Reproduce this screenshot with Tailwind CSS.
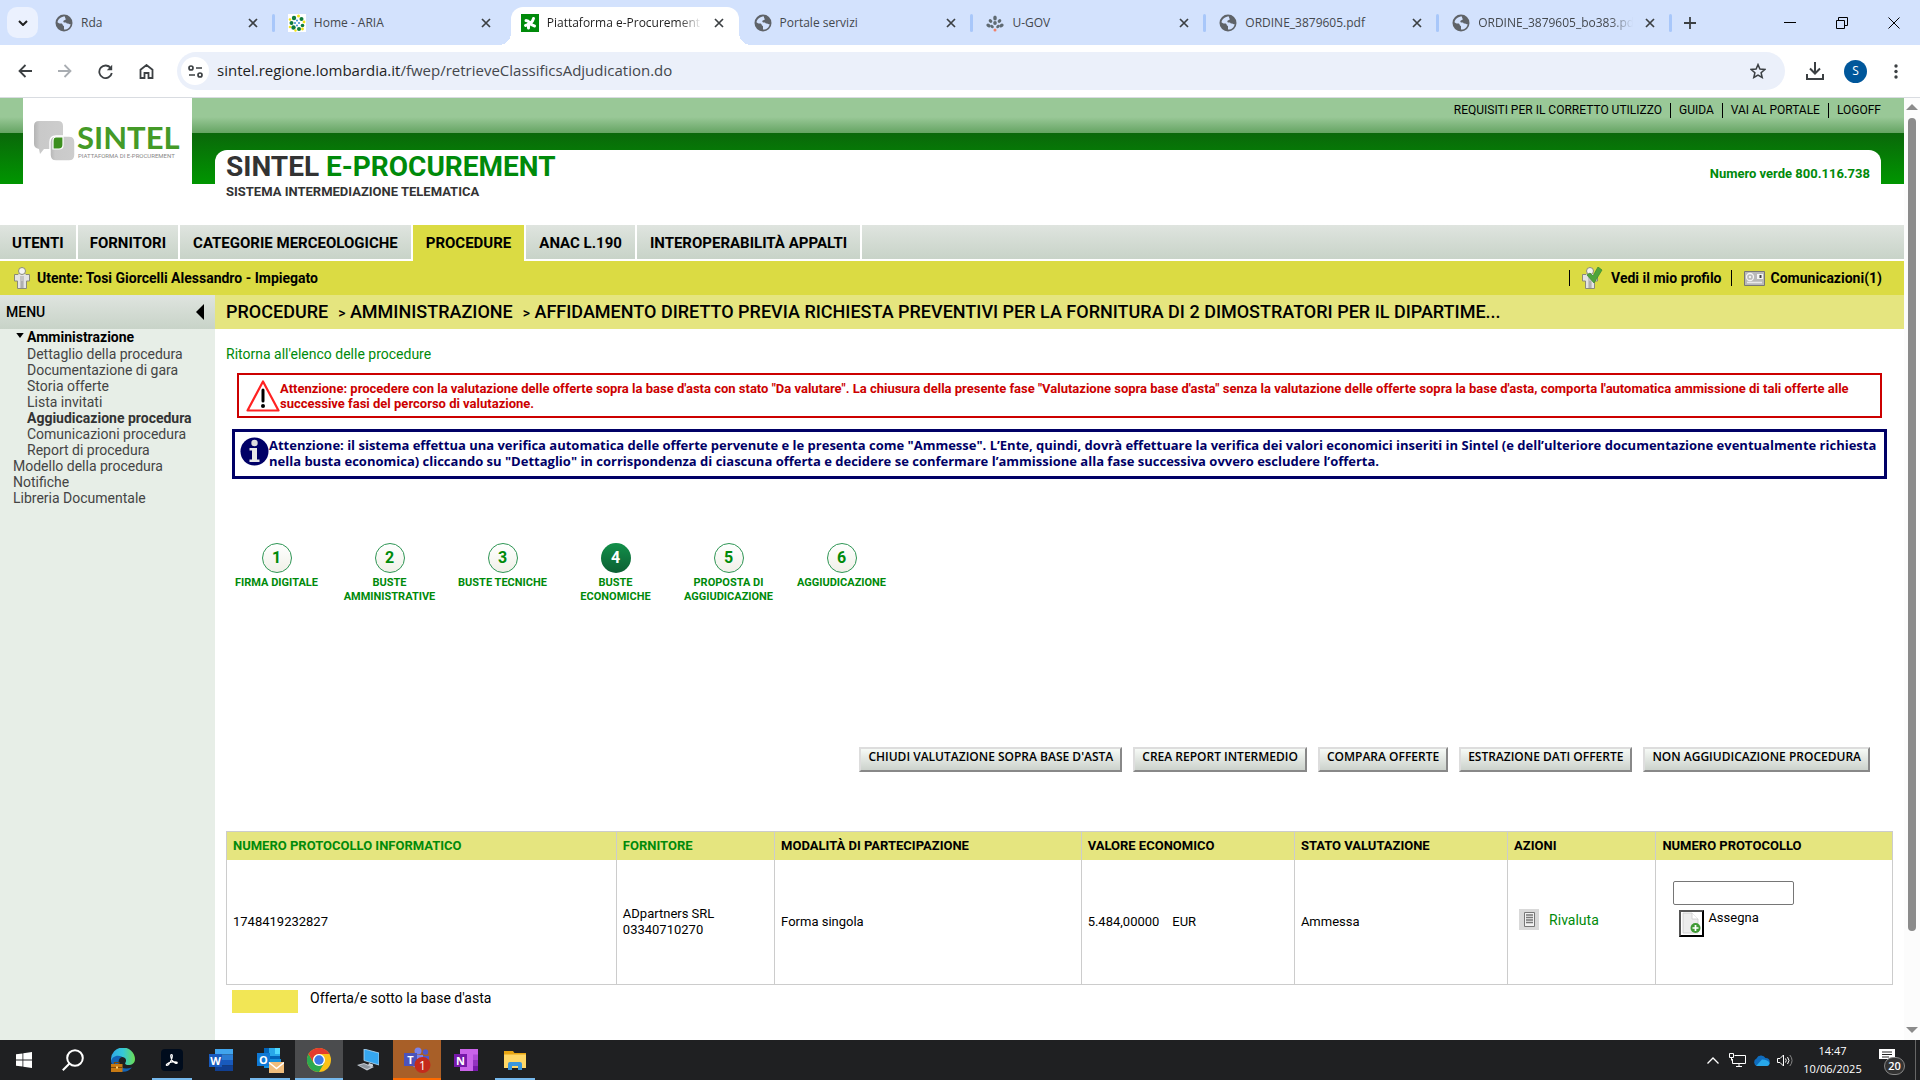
<!DOCTYPE html>
<html lang="it">
<head>
  <meta charset="UTF-8">
  <meta name="viewport" content="width=device-width, initial-scale=1.0">
  <title>Piattaforma e-Procurement</title>
  <script src="https://cdn.jsdelivr.net/npm/@tailwindcss/browser@4"></script>
</head>
<body class="flex h-screen flex-col overflow-hidden bg-white font-['Trebuchet_MS','Roboto',sans-serif] text-sm text-black">

  <!-- Icone riutilizzate -->
  <svg class="hidden">
    <symbol id="globe" viewBox="0 0 18 18">
      <circle cx="9" cy="9" r="8.5" fill="#5f6368"/>
      <path d="M10 2.5C6 2.500 3 5 2.500 8.300c1 1 2.200 1.300 3.500 1.200 1.300 0 1.500.6 1.700 1.400.3.700 1.300.6 1.300 1.500v3.200c3.500.2 6.300-2.200 6.600-5.600-1.200.6-2-.4-3.200-.4-1 0-.9-.9-1.600-1.100-.8-.3-2.500.2-2.500-1.100s1.800-1 2.400-1.900c.4-.6-1-1.500-.7-3z" fill="#d3e2fd"/>
    </symbol>
    <symbol id="close" viewBox="0 0 10 10">
      <path d="M1 1l8 8M9 1L1 9" stroke="#3c4043" stroke-width="1.7" fill="none"/>
    </symbol>
    <symbol id="person" viewBox="0 0 18 22">
      <path d="M1.500 7.500h3.500l1-1h6l1 1h3.500v6.500h-3v7.500H4.500V14h-3z" fill="#e4e4e4" stroke="#8a8a7a" stroke-width="1"/>
      <path d="M7 9h4v12H7z" fill="#c4c4c4"/>
      <circle cx="9" cy="4" r="3.500" fill="#f4f4f4" stroke="#8a8a7a"/>
      <path d="M9 14v7" stroke="#999"/>
    </symbol>
  </svg>

  <!-- Schede del browser -->
  <div class="flex h-[45px] shrink-0 items-end bg-[#d3e2fd] font-['Segoe_UI','Open_Sans',sans-serif] text-xs text-[#44484d]">
    <button aria-label="Cerca schede" class="mr-1 mb-[7px] ml-[7px] flex size-[31px] shrink-0 items-center justify-center rounded-[10px] bg-[#ebf1fe]">
      <svg class="h-[6px] w-[10px]" viewBox="0 0 10 6"><path d="M1 1l4 4 4-4" fill="none" stroke="#1f1f1f" stroke-width="2"/></svg>
    </button>
    <div class="flex h-full min-w-0 max-w-[1630px] flex-1 pt-[7px]">
      <div class="flex h-[31px] min-w-0 flex-1 items-center pl-[13px]">
        <svg class="size-[18px] shrink-0"><use href="#globe"/></svg>
        <span class="ml-2 flex-1 truncate">Rda</span>
        <button aria-label="Chiudi" class="mr-[14px] size-[10px]"><svg class="size-[10px]"><use href="#close"/></svg></button>
        <span class="h-[18px] w-[3px] rounded bg-[#a8c7fa]"></span>
      </div>
      <div class="flex h-[31px] min-w-0 flex-1 items-center pl-[13px]">
        <svg class="size-[18px] shrink-0" viewBox="0 0 18 18"><path fill="#fff" d="M0 0h18v18H0z"/><g fill="#107c3c"><circle cx="6" cy="4" r="2.200"/><circle cx="13.500" cy="5" r="2"/><circle cx="3.500" cy="9" r="2"/><circle cx="14.500" cy="11.500" r="1.800"/><circle cx="5.500" cy="13.500" r="2.200"/><circle cx="11" cy="15" r="2"/></g><g fill="#f1e31b"><circle cx="10.500" cy="2" r="1.500"/><circle cx="2" cy="5.500" r="1.300"/><circle cx="16" cy="8" r="1.400"/><circle cx="2" cy="13" r="1.300"/><circle cx="14.500" cy="15" r="1.400"/><circle cx="7.500" cy="16.500" r="1.200"/></g><g fill="#3b8fd0"><circle cx="9" cy="6.500" r="1"/><circle cx="7" cy="9" r="1"/><circle cx="11" cy="9" r="1"/><circle cx="9" cy="11.500" r="1"/></g></svg>
        <span class="ml-2 flex-1 truncate">Home - ARIA</span>
        <button aria-label="Chiudi" class="mr-[14px] size-[10px]"><svg class="size-[10px]"><use href="#close"/></svg></button>
        <span class="w-[3px]"></span>
      </div>
      <!-- Scheda attiva -->
      <div class="relative flex h-[38px] min-w-0 flex-1 items-center pb-[7px] pl-[13px] text-[#1f1f1f]">
        <div class="absolute inset-y-0 right-[2px] left-[3px] rounded-t-[12px] bg-white">
          <span class="absolute bottom-0 -left-3 size-3 bg-[radial-gradient(circle_at_0_0,#d3e2fd_12px,#fff_12px)]"></span>
          <span class="absolute -right-3 bottom-0 size-3 bg-[radial-gradient(circle_at_100%_0,#d3e2fd_12px,#fff_12px)]"></span>
        </div>
        <svg class="relative size-[18px] shrink-0" viewBox="0 0 18 18"><path fill="#008a0a" d="M0 0h18v18H0z"/><g fill="none" stroke="#fff" stroke-width="3" stroke-linecap="round"><path d="M5 6.500q2 0 4 2.500t4.500 3"/><path d="M12.500 4.500q-.5 2.500-3 4.500T7.500 14"/><path d="M4.500 11.500q2-.5 4-2.500"/></g></svg>
        <span class="relative ml-2 flex-1 overflow-hidden [mask-image:linear-gradient(to_right,#000_85%,transparent)] whitespace-nowrap">Piattaforma e-Procurement</span>
        <button aria-label="Chiudi" class="relative mr-[14px] ml-3 size-[10px]"><svg class="size-[10px]"><use href="#close"/></svg></button>
        <span class="w-[3px]"></span>
      </div>
      <div class="flex h-[31px] min-w-0 flex-1 items-center pl-[13px]">
        <svg class="size-[18px] shrink-0"><use href="#globe"/></svg>
        <span class="ml-2 flex-1 truncate">Portale servizi</span>
        <button aria-label="Chiudi" class="mr-[14px] size-[10px]"><svg class="size-[10px]"><use href="#close"/></svg></button>
        <span class="h-[18px] w-[3px] rounded bg-[#a8c7fa]"></span>
      </div>
      <div class="flex h-[31px] min-w-0 flex-1 items-center pl-[13px]">
        <svg class="size-[18px] shrink-0" viewBox="0 0 18 18"><g fill="#5f6a72"><ellipse cx="9" cy="4" rx="1.800" ry="2.500"/><ellipse cx="4.500" cy="7" rx="2" ry="1.600" transform="rotate(40 4.500 7)"/><ellipse cx="13.500" cy="7" rx="2" ry="1.600" transform="rotate(-40 13.500 7)"/><ellipse cx="9" cy="9" rx="1.800" ry="2"/><ellipse cx="2.500" cy="11.500" rx="2.200" ry="1.700" transform="rotate(40 2.500 11.500)"/><ellipse cx="15.500" cy="11.500" rx="2.200" ry="1.700" transform="rotate(-40 15.500 11.500)"/><ellipse cx="6" cy="12.500" rx="2" ry="1.500" transform="rotate(45 6 12.500)"/><ellipse cx="12" cy="12.500" rx="2" ry="1.500" transform="rotate(-45 12 12.500)"/></g><circle cx="9" cy="16" r="1.500" fill="#f0806a"/></svg>
        <span class="ml-2 flex-1 truncate">U-GOV</span>
        <button aria-label="Chiudi" class="mr-[14px] size-[10px]"><svg class="size-[10px]"><use href="#close"/></svg></button>
        <span class="h-[18px] w-[3px] rounded bg-[#a8c7fa]"></span>
      </div>
      <div class="flex h-[31px] min-w-0 flex-1 items-center pl-[13px]">
        <svg class="size-[18px] shrink-0"><use href="#globe"/></svg>
        <span class="ml-2 flex-1 truncate">ORDINE_3879605.pdf</span>
        <button aria-label="Chiudi" class="mr-[14px] size-[10px]"><svg class="size-[10px]"><use href="#close"/></svg></button>
        <span class="h-[18px] w-[3px] rounded bg-[#a8c7fa]"></span>
      </div>
      <div class="flex h-[31px] min-w-0 flex-1 items-center pl-[13px]">
        <svg class="size-[18px] shrink-0"><use href="#globe"/></svg>
        <span class="ml-2 flex-1 overflow-hidden [mask-image:linear-gradient(to_right,#000_85%,transparent)] whitespace-nowrap">ORDINE_3879605_bo383.pdf</span>
        <button aria-label="Chiudi" class="mr-[14px] ml-3 size-[10px]"><svg class="size-[10px]"><use href="#close"/></svg></button>
        <span class="h-[18px] w-[3px] rounded bg-[#a8c7fa]"></span>
      </div>
    </div>
    <button aria-label="Nuova scheda" class="mb-4 ml-3 size-3"><svg class="size-3" viewBox="0 0 12 12"><path d="M6 0v12M0 6h12" stroke="#3c4043" stroke-width="1.8"/></svg></button>
    <div class="mb-4 ml-auto flex items-center gap-10 pr-5">
      <button aria-label="Riduci" class="size-3"><svg class="size-3" viewBox="0 0 12 12"><path d="M0 5.500h12" stroke="#000"/></svg></button>
      <button aria-label="Ripristina" class="size-3"><svg class="size-3" viewBox="0 0 12 12"><path d="M.5 3.500h8v8h-8zM2.500 3V.5h9v8H9" stroke="#000" fill="none"/></svg></button>
      <button aria-label="Chiudi finestra" class="size-3"><svg class="size-3" viewBox="0 0 12 12"><path d="M.5.5l11 11M11.500.5l-11 11" stroke="#000" fill="none"/></svg></button>
    </div>
  </div>

  <!-- Barra degli indirizzi -->
  <div class="flex h-[53px] shrink-0 items-center border-b border-[#d9dce1] bg-white pr-[22px] pl-[18px] font-['Segoe_UI','Open_Sans',sans-serif]">
    <div class="flex items-center gap-[26px]">
      <button aria-label="Indietro" class="size-[14px]"><svg class="size-[14px]" viewBox="0 0 14 14"><path d="M14 7H1.500M7.500 1l-6 6 6 6" fill="none" stroke="#3c4043" stroke-width="1.800"/></svg></button>
      <button aria-label="Avanti" class="size-[14px]"><svg class="size-[14px]" viewBox="0 0 14 14"><path d="M0 7h12.500M6.500 1l6 6-6 6" fill="none" stroke="#a9adb2" stroke-width="1.800"/></svg></button>
      <button aria-label="Ricarica" class="size-[15px]"><svg class="size-[15px]" viewBox="0 0 15 15"><path d="M12.800 4.200A6.300 6.300 0 1 0 13.800 9" fill="none" stroke="#3c4043" stroke-width="1.800"/><path d="M14.200.8v5.400H8.800z" fill="#3c4043"/></svg></button>
      <button aria-label="Pagina iniziale" class="size-[15px]"><svg class="size-[15px]" viewBox="0 0 15 15"><path d="M1.500 5.800L7.500 1l6 4.800v8.200h-4V9h-4v5h-4z" fill="none" stroke="#3c4043" stroke-width="1.800"/></svg></button>
    </div>
    <div class="ml-[23px] flex h-[38px] flex-1 items-center rounded-full bg-[#ebf0fa] pr-[19px] pl-1">
      <span class="flex size-7 shrink-0 items-center justify-center rounded-full bg-white">
        <svg class="h-[13px] w-[15px]" viewBox="0 0 15 13" fill="none" stroke="#3c4043" stroke-width="1.700"><circle cx="3" cy="3" r="2"/><path d="M8 3h6M1 10h6"/><circle cx="12" cy="10" r="2"/></svg>
      </span>
      <p class="ml-2 flex-1 text-[15px] text-[#44474c]"><span class="text-[#1f1f1f]">sintel.regione.lombardia.it</span>/fwep/retrieveClassificsAdjudication.do</p>
      <button aria-label="Preferiti" class="size-4"><svg class="size-4" viewBox="0 0 16 16"><path d="M8 1.600l1.900 4.500 4.900.4-3.700 3.200 1.100 4.800L8 12l-4.200 2.500 1.100-4.800L1.200 6.500l4.900-.4z" fill="none" stroke="#3c4043" stroke-width="1.500"/></svg></button>
    </div>
    <button aria-label="Download" class="ml-[21px] size-[18px]"><svg class="size-[18px]" viewBox="0 0 18 18"><path d="M9 0v11M4 6.500l5 5 5-5M1 12v5h16v-5" fill="none" stroke="#3c4043" stroke-width="2"/></svg></button>
    <button class="ml-5 flex size-[23px] items-center justify-center rounded-full bg-[#00579b] text-xs text-white">S</button>
    <button aria-label="Menu" class="ml-[27px] h-[15px] w-1"><svg class="h-[15px] w-1" viewBox="0 0 4 15" fill="#3c4043"><circle cx="2" cy="2" r="1.700"/><circle cx="2" cy="7.500" r="1.700"/><circle cx="2" cy="13" r="1.700"/></svg></button>
  </div>

  <div class="flex min-h-0 flex-1">
    <div class="flex min-w-0 flex-1 flex-col">

      <!-- Testata -->
      <header class="flex h-[127px] shrink-0 bg-[linear-gradient(to_bottom,#99c897_0px,#99c897_19px,#65a463_35px,#0a680a_35px,#009600_86px)] bg-[length:100%_86px] bg-no-repeat">
        <a href="#" aria-label="Sintel" class="ml-[23px] h-[86px] w-[169px] bg-white">
          <svg class="h-[86px] w-[169px]" viewBox="0 0 169 86">
            <defs><linearGradient id="bubble" x1="0" x2="1"><stop offset="0" stop-color="#b4b4b4"/><stop offset=".2" stop-color="#c9c9c9"/><stop offset="1" stop-color="#cdcdcd"/></linearGradient></defs>
            <path d="M16 23h19q5 0 5 5v14l-12 1v8h-7l-4 5-1-5q-5-1-5-5V28q0-5 5-5z" fill="url(#bubble)"/>
            <path d="M33 38h13q6 0 6 6v13q0 6-6 6H33q-6 0-6-6V44q0-6 6-6z" fill="url(#bubble)" stroke="#fff" stroke-width="1.500"/>
            <path d="M33 39h7v8q0 4-4 4h-6v-8q0-4 3-4z" fill="#3c8f1e" stroke="#fff" stroke-width="1.200"/>
            <text x="54" y="51" font-family="Lato, sans-serif" font-weight="700" font-size="31" fill="#449a28">SINTEL</text>
            <text x="55" y="60" font-family="Roboto, sans-serif" font-size="6" fill="#888">PIATTAFORMA DI E-PROCUREMENT</text>
          </svg>
        </a>
        <div class="mx-[23px] flex flex-1 flex-col">
          <nav class="flex h-[52px] justify-end divide-x divide-black pt-[5px] text-xs leading-[15px] [&>a]:h-[15px]">
            <a href="#" class="pr-2">REQUISITI PER IL CORRETTO UTILIZZO</a>
            <a href="#" class="px-2">GUIDA</a>
            <a href="#" class="px-2">VAI AL PORTALE</a>
            <a href="#" class="pl-2">LOGOFF</a>
          </nav>
          <div class="flex flex-1 justify-between rounded-t-xl bg-white pr-[11px] pl-[11px]">
            <div>
              <h1 class="text-[28px] leading-[34px] font-bold text-[#333]">SINTEL <span class="text-[#008a0a]">E-PROCUREMENT</span></h1>
              <p class="text-[13px] leading-4 font-bold text-[#333]">SISTEMA INTERMEDIAZIONE TELEMATICA</p>
            </div>
            <p class="pt-4 text-[13px] leading-4 font-bold text-[#008a0a]">Numero verde 800.116.738</p>
          </div>
        </div>
      </header>

      <nav class="flex h-9 shrink-0 gap-[2px] text-[15px] leading-9 font-bold [&>a]:px-[13px] [&>a:first-child]:px-3 [&>a:nth-child(2)]:px-3">
        <a href="#" class="mb-[2px] bg-linear-to-b from-[#dfe4df] to-[#c8d3c8]">UTENTI</a>
        <a href="#" class="mb-[2px] bg-linear-to-b from-[#dfe4df] to-[#c8d3c8]">FORNITORI</a>
        <a href="#" class="mb-[2px] bg-linear-to-b from-[#dfe4df] to-[#c8d3c8]">CATEGORIE MERCEOLOGICHE</a>
        <a href="#" class="bg-[#dbdb43]">PROCEDURE</a>
        <a href="#" class="mb-[2px] bg-linear-to-b from-[#dfe4df] to-[#c8d3c8]">ANAC L.190</a>
        <a href="#" class="mb-[2px] bg-linear-to-b from-[#dfe4df] to-[#c8d3c8]">INTEROPERABILITÀ APPALTI</a>
        <span class="mb-[2px] flex-1 bg-linear-to-b from-[#dfe4df] to-[#c8d3c8]"></span>
      </nav>

      <div class="flex h-[34px] shrink-0 items-center bg-[#dbdb43] pr-[22px] pl-[13px] font-bold">
        <svg class="h-[22px] w-[18px]"><use href="#person"/></svg>
        <span class="ml-[6px]">Utente: Tosi Giorcelli Alessandro - Impiegato</span>
        <a href="#" class="ml-auto flex h-4 items-center border-l border-black pr-[9px] pl-[11px]">
          <svg class="h-[22px] w-[22px]" viewBox="0 0 22 22"><use href="#person" width="18" height="22"/><path d="M6 8l3-2 3 3 5-9 4 3-8 13z" fill="#4fa53c" stroke="#3c8f30" stroke-width=".8"/></svg>
          <span class="ml-2">Vedi il mio profilo</span>
        </a>
        <a href="#" class="flex h-4 items-center border-l border-black pl-3">
          <svg class="h-[15px] w-[21px]" viewBox="0 0 21 15"><path d="M.5.5h20v14H.5z" fill="#b9b9b9" stroke="#777"/><path d="M13 3h6v5h-6z" fill="#f5f5f5"/><path d="M15.500 4h2v3h-2z" fill="#444"/><circle cx="6" cy="6" r="3.500" fill="none" stroke="#f4f4f4" stroke-width="1.300"/><circle cx="6" cy="6" r="1.200" fill="#f4f4f4"/><path d="M3 11.500h15" stroke="#e9e9e9" stroke-width="1.500"/></svg>
          <span class="ml-[6px]">Comunicazioni(1)</span>
        </a>
      </div>

      <div class="flex min-h-0 flex-1">
        <!-- Menu laterale -->
        <aside class="w-[215px] shrink-0 bg-[#e7eee7] leading-4 text-[#444]">
          <div class="flex h-[34px] items-center justify-between bg-linear-to-b from-[#dfe4df] to-[#c8d3c8] pr-[11px] pl-[6px] font-medium text-black">
            <span>MENU</span>
            <button aria-label="Chiudi menu" class="h-4 w-2"><svg class="h-4 w-2" viewBox="0 0 8 16"><path d="M8 0v16L0 8z"/></svg></button>
          </div>
          <ul class="pl-[27px]">
            <li class="relative pb-[1px] font-bold text-black">
              <svg class="absolute top-[4px] -left-[11px] h-[5px] w-2" viewBox="0 0 9 6"><path d="M0 0h9L4.500 6z"/></svg>
              <a href="#">Amministrazione</a>
            </li>
            <li><a href="#">Dettaglio della procedura</a></li>
            <li><a href="#">Documentazione di gara</a></li>
            <li><a href="#">Storia offerte</a></li>
            <li><a href="#">Lista invitati</a></li>
            <li><a href="#" class="font-bold text-[#333]">Aggiudicazione procedura</a></li>
            <li><a href="#">Comunicazioni procedura</a></li>
            <li><a href="#">Report di procedura</a></li>
          </ul>
          <ul class="pl-[13px]">
            <li><a href="#">Modello della procedura</a></li>
            <li><a href="#">Notifiche</a></li>
            <li><a href="#">Libreria Documentale</a></li>
          </ul>
        </aside>

        <main class="min-w-0 flex-1">
          <div class="flex h-[34px] items-center gap-[10px] bg-[#e5e57f] pl-[11px] text-lg font-medium whitespace-nowrap">
            <span>PROCEDURE</span>
            <span><span class="text-sm">&gt;</span> AMMINISTRAZIONE</span>
            <span><span class="text-sm">&gt;</span> AFFIDAMENTO DIRETTO PREVIA RICHIESTA PREVENTIVI PER LA FORNITURA DI 2 DIMOSTRATORI PER IL DIPARTIME...</span>
          </div>

          <div class="pr-[11px] pl-[11px]">
            <p class="pt-[15px] leading-5"><a href="#" class="text-[#008a0a]">Ritorna all'elenco delle procedure</a></p>

            <div class="mx-[11px] mt-[9px] flex items-center border-2 border-[#c00] pt-[5px] pb-1 pl-[7px] text-[13px] leading-[15px] font-bold text-[#c00]">
              <svg class="h-8 w-[34px] shrink-0" viewBox="0 0 34 32"><path d="M17 1.500L32.500 30.500H1.500z" fill="#fff" stroke="#f22" stroke-width="2.200" stroke-linejoin="round"/><path d="M17 10v11" stroke="#000" stroke-width="3" stroke-linecap="round"/><circle cx="17" cy="26" r="2"/></svg>
              <p>Attenzione: procedere con la valutazione delle offerte sopra la base d'asta con stato "Da valutare". La chiusura della presente fase "Valutazione sopra base d'asta" senza la valutazione delle offerte sopra la base d'asta, comporta l'automatica ammissione di tali offerte alle<br>successive fasi del percorso di valutazione.</p>
            </div>

            <div class="mx-[6px] mt-[11px] flex items-start border-3 border-[#006] pt-[5px] pb-[7px] pl-[5px] font-['Trebuchet_MS','Open_Sans',sans-serif] text-[13px] leading-4 font-bold text-[#006]">
              <svg class="size-[29px] shrink-0" viewBox="0 0 29 29"><circle cx="14.500" cy="14.500" r="14" fill="#000066"/><circle cx="14.500" cy="6" r="3.200" fill="#ddd"/><path d="M9.500 11h7.500v11.500h2.500V25h-10v-2.500H12v-9H9.500z" fill="#e8e8e8"/></svg>
              <p>Attenzione: il sistema effettua una verifica automatica delle offerte pervenute e le presenta come "Ammesse". L’Ente, quindi, dovrà effettuare la verifica dei valori economici inseriti in Sintel (e dell’ulteriore documentazione eventualmente richiesta<br>nella busta economica) cliccando su "Dettaglio" in corrispondenza di ciascuna offerta e decidere se confermare l’ammissione alla fase successiva ovvero escludere l’offerta.</p>
            </div>

            <!-- Fasi -->
            <ol class="-ml-[6px] mt-16 flex h-[60px] text-center text-[11px] leading-[14px] font-bold text-[#008a0a] [&>li]:flex [&>li]:w-[113px] [&>li]:flex-col [&>li]:items-center [&>li]:gap-[3px]">
              <li><span class="size-[30px] shrink-0 rounded-full border border-[#2f9655] bg-linear-to-b from-white to-[#f1f0e8] text-base leading-[28px]">1</span><a href="#">FIRMA DIGITALE</a></li>
              <li><span class="size-[30px] shrink-0 rounded-full border border-[#2f9655] bg-linear-to-b from-white to-[#f1f0e8] text-base leading-[28px]">2</span><a href="#">BUSTE<br>AMMINISTRATIVE</a></li>
              <li><span class="size-[30px] shrink-0 rounded-full border border-[#2f9655] bg-linear-to-b from-white to-[#f1f0e8] text-base leading-[28px]">3</span><a href="#">BUSTE TECNICHE</a></li>
              <li><span class="size-[30px] shrink-0 rounded-full bg-linear-to-b from-[#12904a] to-[#0c5f33] text-base leading-[30px] text-white">4</span><a href="#">BUSTE<br>ECONOMICHE</a></li>
              <li><span class="size-[30px] shrink-0 rounded-full border border-[#2f9655] bg-linear-to-b from-white to-[#f1f0e8] text-base leading-[28px]">5</span><a href="#">PROPOSTA DI<br>AGGIUDICAZIONE</a></li>
              <li><span class="size-[30px] shrink-0 rounded-full border border-[#2f9655] bg-linear-to-b from-white to-[#f1f0e8] text-base leading-[28px]">6</span><a href="#">AGGIUDICAZIONE</a></li>
            </ol>

            <div class="mt-36 mr-[23px] flex justify-end gap-[11px] font-['Trebuchet_MS','Open_Sans',sans-serif] text-xs leading-4 font-semibold [&>button]:h-[25px] [&>button]:border-2 [&>button]:border-t-[#ddd] [&>button]:border-r-[#888] [&>button]:border-b-[#888] [&>button]:border-l-[#ddd] [&>button]:bg-linear-to-b [&>button]:from-[#f6faf6] [&>button]:to-[#ccd2cc] [&>button]:px-[7px] [&>button]:pb-[5px]">
              <button>CHIUDI VALUTAZIONE SOPRA BASE D'ASTA</button>
              <button>CREA REPORT INTERMEDIO</button>
              <button>COMPARA OFFERTE</button>
              <button>ESTRAZIONE DATI OFFERTE</button>
              <button>NON AGGIUDICAZIONE PROCEDURA</button>
            </div>

            <table class="mt-[59px] w-full table-fixed border border-[#ccc] text-left text-[13px] leading-4 [&_td]:border-x [&_td]:border-[#ccc] [&_td]:px-[6px] [&_th]:border-x [&_th]:border-[#ccc] [&_th]:px-[6px]">
              <thead>
                <tr class="h-7 bg-[#e5e57f]">
                  <th class="w-[23.4%]"><a href="#" class="text-[#008a0a]">NUMERO PROTOCOLLO INFORMATICO</a></th>
                  <th class="w-[9.5%]"><a href="#" class="text-[#008a0a]">FORNITORE</a></th>
                  <th class="w-[18.4%]">MODALITÀ DI PARTECIPAZIONE</th>
                  <th class="w-[12.8%]">VALORE ECONOMICO</th>
                  <th class="w-[12.8%]">STATO VALUTAZIONE</th>
                  <th class="w-[8.9%]">AZIONI</th>
                  <th>NUMERO PROTOCOLLO</th>
                </tr>
              </thead>
              <tbody>
                <tr class="h-[125px]">
                  <td>1748419232827</td>
                  <td>ADpartners SRL<br>03340710270</td>
                  <td>Forma singola</td>
                  <td>5.484,00000 &nbsp;&nbsp; EUR</td>
                  <td>Ammessa</td>
                  <td>
                    <a href="#" class="flex items-center gap-[10px] pb-1 pl-[5px] text-sm text-[#008a0a]">
                      <svg class="h-[21px] w-5" viewBox="0 0 20 21"><path fill="#d9d9d9" d="M0 0h20v21H0z"/><path d="M5.500 3.500h10v14h-10z" fill="#f2f2f2" stroke="#777"/><path d="M7 6h7M7 8.500h7M7 11h7M7 13.500h7" stroke="#777" stroke-width="1.300"/></svg>
                      Rivaluta
                    </a>
                  </td>
                  <td class="pt-[21px] align-top">
                    <input type="text" aria-label="Numero protocollo" class="ml-[11px] block h-6 w-[121px] rounded-xs border border-[#767676] bg-white px-1">
                    <div class="mt-[5px] ml-[17px] flex gap-1">
                      <button id="assegna" aria-labelledby="assegna-label" class="h-[27px] w-[25px] border-2 border-t-[#555] border-r-black border-b-black border-l-[#555] bg-white"><svg class="h-[23px] w-[21px]" viewBox="0 0 21 23"><path d="M2 1h9l6 6v14H2z" fill="#ececec" stroke="#ccc" stroke-width=".8"/><path d="M11 1v6h6" fill="#fff" stroke="#ccc" stroke-width=".8"/><circle cx="14.500" cy="16" r="5" fill="#3f9a34"/><path d="M14.500 13v6M11.500 16h6" stroke="#fff" stroke-width="1.700"/></svg></button>
                      <label id="assegna-label" for="assegna">Assegna</label>
                    </div>
                  </td>
                </tr>
              </tbody>
            </table>

            <div class="mt-[5px] ml-[6px] flex gap-3 leading-4">
              <span class="h-[23px] w-[66px] bg-[#f2e655]"></span>
              <span>Offerta/e sotto la base d'asta</span>
            </div>
          </div>
        </main>
      </div>
    </div>

    <!-- Barra di scorrimento -->
    <div class="flex w-4 shrink-0 flex-col items-center bg-[#fcfcfc] pt-[6px] pb-[7px]">
      <svg class="h-[6px] w-3 shrink-0" viewBox="0 0 12 6"><path d="M6 0l6 6H0z" fill="#8b8b8b"/></svg>
      <div class="mt-2 w-2 flex-[0_1_813px] rounded-full bg-[#8b8b8b]"></div>
      <svg class="mt-auto h-[6px] w-3 shrink-0" viewBox="0 0 12 6"><path d="M6 6l6-6H0z" fill="#8b8b8b"/></svg>
    </div>
  </div>

  <!-- Barra delle applicazioni -->
  <footer class="flex h-10 shrink-0 items-stretch bg-[#1f2022] font-['Segoe_UI','Open_Sans',sans-serif] text-white">
    <div class="flex gap-[1px] [&>button]:flex [&>button]:w-12 [&>button]:items-center [&>button]:justify-center">
      <button aria-label="Start"><svg class="size-4" viewBox="0 0 16 16" fill="#fff"><path d="M0 2.300l6.500-.9v6.200H0zM7.300 1.300L16 0v7.600H7.300zM0 8.400h6.500v6.200L0 13.700zM7.300 8.400H16V16l-8.700-1.300z"/></svg></button>
      <button aria-label="Cerca"><svg class="size-[22px]" viewBox="0 0 22 22" fill="none" stroke="#fff" stroke-width="2"><circle cx="13" cy="9" r="7.800"/><path d="M7.500 14.500L.8 21.300"/></svg></button>
      <button aria-label="Edge" class="ml-[1px]"><svg class="size-6" viewBox="0 0 24 24"><defs><linearGradient id="eg" x1="0" x2="1"><stop offset="0" stop-color="#2fa8e8"/><stop offset=".5" stop-color="#35c8d8"/><stop offset="1" stop-color="#6bdd52"/></linearGradient></defs><path d="M0 12A12 12 0 0 1 24 11c0 4-3 6-6.500 6-3 0-4-1.200-3-2.500 1.200-2 .5-5-3-5.500C6 8 1 11 0 15z" fill="url(#eg)"/><path d="M0 13c1-4 6-7 11-4-3 1-4 4-3 7 1.500 4 6 6 13 3.500A12 12 0 0 1 0 13z" fill="#1363b5"/><path d="M0 16h11.500v8H0z" fill="#c87a14"/><path d="M3.500 16v-1.500h4.500V16M0 19.500h11.500" stroke="#7c480a" fill="none" stroke-width="1.200"/><path d="M5 18.500h2v2H5z" fill="#ffd070"/></svg></button>
      <button aria-label="Acrobat" class="bg-[linear-gradient(#76b9ed,#76b9ed)] bg-[length:40px_2px] bg-bottom bg-no-repeat"><svg class="size-[22px]" viewBox="0 0 22 22"><rect width="22" height="22" rx="4" fill="#000c1d"/><path d="M10.500 5.500c1.600 0 .6 4-.8 6.800-1.200 2.400-2.800 4.400-4 4.200-1.400-.5 1-2.500 4.300-3.300 3-.7 6.300-.6 6.200.6-.2 1.300-3.200.3-4.800-2.100-1.400-2-2.400-6.200-.9-6.200z" fill="none" stroke="#fff" stroke-width="1.200"/></svg></button>
      <button aria-label="Word"><svg class="h-[22px] w-6" viewBox="0 0 24 22"><path fill="#41a5ee" d="M6 0h18v5.500H6z"/><path fill="#2b7cd3" d="M6 5.500h18V11H6z"/><path fill="#185abd" d="M6 11h18v5.500H6z"/><path fill="#103f91" d="M6 16.500h18V22H6z"/><path fill="#185abd" d="M0 5h13v13H0z"/><text x="6.500" y="15.500" font-size="11" font-weight="700" text-anchor="middle" fill="#fff">W</text></svg></button>
      <button aria-label="Outlook" class="bg-[linear-gradient(#76b9ed,#76b9ed)] bg-[length:40px_2px] bg-bottom bg-no-repeat"><svg class="h-[26px] w-[27px]" viewBox="0 0 27 26"><path fill="#0364b8" d="M7 1h16v18H7z"/><path fill="#28a8ea" d="M12 1h11v8H12z"/><path fill="#50d9ff" d="M18 1h5v6h-5z"/><path fill="#1490df" d="M7 12h17v9H7z"/><path fill="#0f78d4" d="M0 6h13v13H0z"/><text x="6.500" y="16.500" font-size="11" font-weight="700" text-anchor="middle" fill="#fff">O</text><path fill="#f0bd7c" d="M12 15h15v11H12z"/><path d="M12 15.500l7.500 6 7.500-6" fill="none" stroke="#fff" stroke-width="1.500"/></svg></button>
      <button aria-label="Chrome" class="border-b-2 border-[#76b9ed] bg-[#4b4c4e] pt-[2px]"><svg class="size-6" viewBox="0 0 24 24"><circle cx="12" cy="12" r="12" fill="#fbc116"/><path d="M1.600 6A12 12 0 0 0 12 24l5.200-9L6.800 15z" fill="#2da94f"/><path d="M1.600 6a12 12 0 0 1 20.800 0H12a6 6 0 0 0-5.200 9z" fill="#e33b2e"/><circle cx="12" cy="12" r="6" fill="#fff"/><circle cx="12" cy="12" r="4.700" fill="#3c79e6"/></svg></button>
      <button aria-label="Desktop remoto"><svg class="size-[22px]" viewBox="0 0 22 22"><path d="M7 0l15 4v12L7 11.500z" fill="#35a6ef" stroke="#b9dcf5" stroke-width=".8"/><path d="M12 14l4 1.500v2l-5-1z" fill="#ccd3da"/><path d="M0 16l7-2 10 4-7 3.500z" fill="#c3cad2"/><path d="M2 16.500l5-1.500 7 3-4 2z" fill="#8d969f"/></svg></button>
      <button aria-label="Teams" class="border-b-2 border-[#ff6b00] bg-[#a85f28] pt-[2px]"><svg class="h-[26px] w-[27px]" viewBox="0 0 27 26"><circle cx="14" cy="4" r="3.500" fill="#7b83eb"/><circle cx="21.500" cy="5" r="2.700" fill="#5059c9"/><path d="M8 8h11v8a6 6 0 0 1-11 2z" fill="#7b83eb"/><path d="M19 9h6v6a4 4 0 0 1-6 3z" fill="#5059c9"/><path d="M0 6h13v13H0z" fill="#4b53bc"/><text x="6.500" y="16.500" font-size="11" font-weight="700" text-anchor="middle" fill="#fff">T</text><circle cx="18.500" cy="18" r="8" fill="#c42b1c"/><text x="18.500" y="22.500" font-size="12" text-anchor="middle" fill="#fff">1</text></svg></button>
      <button aria-label="OneNote"><svg class="h-[22px] w-6" viewBox="0 0 24 22"><path fill="#ca64ea" d="M6 0h18v22H6z"/><path fill="#ae4bd5" d="M19 5.500h5V11h-5z"/><path fill="#9332bf" d="M19 11h5v5.500h-5z"/><path fill="#7719aa" d="M19 16.500h5V22h-5zM0 5h13v13H0z"/><text x="6.500" y="15.500" font-size="11" font-weight="700" text-anchor="middle" fill="#fff">N</text></svg></button>
      <button aria-label="Esplora file" class="bg-[linear-gradient(#76b9ed,#76b9ed)] bg-[length:40px_2px] bg-bottom bg-no-repeat"><svg class="h-[19px] w-[22px]" viewBox="0 0 22 19"><path fill="#e8a512" d="M0 0h9l1.500 2H22v5H0z"/><path fill="#ffd766" d="M0 3.500h22V17H0z"/><path d="M4 19v-6q0-2 2-2h10q2 0 2 2v6h-4v-4H8v4z" fill="#3a96dd"/></svg></button>
    </div>
    <div class="ml-auto flex items-center pr-1">
      <svg class="h-[7px] w-3" viewBox="0 0 12 7"><path d="M.5 6.500L6 1l5.500 5.500" fill="none" stroke="#fff" stroke-width="1.300"/></svg>
      <svg class="ml-[10px] h-[14px] w-[17px]" viewBox="0 0 17 14" fill="none" stroke="#fff"><path d="M5.500 2.500h11v8h-13V6M10 10.500v3M7 13.500h6M.5.500h4v4h-4zM2.500 4.500v3"/></svg>
      <svg class="ml-[7px] h-[11px] w-[17px]" viewBox="0 0 17 11"><path d="M4 11a4 4 0 0 1-.5-7.500A5 5 0 0 1 12.500 3 4 4 0 0 1 13 11z" fill="#0f6cbd"/><path d="M3 11l6-6.500q6 0 7.500 3.500 0 3-3 3z" fill="#28a8ea"/></svg>
      <svg class="ml-[7px] h-[13px] w-4" viewBox="0 0 16 13" fill="none" stroke="#fff"><path d="M.5 4.500H3L6.500 1v11L3 8.500H.5zM8.500 4.500q1.500 2 0 4M10.500 3q3 3.500 0 7"/><path d="M12.800 1q4.500 5.500 0 11" stroke="#888"/></svg>
      <div class="mx-[10px] w-[59px] text-center text-[11px] leading-[18px]">14:47<br>10/06/2025</div>
      <div class="relative ml-[6px] h-[30px] w-[31px]">
        <svg class="size-5" viewBox="0 0 20 20"><path d="M1 4h16v13h-5l-3-3H1z" fill="#fff"/><path d="M4 7h10M4 9.500h10M4 12h7" stroke="#222"/></svg>
        <span class="absolute top-[12px] left-[6px] flex h-[18px] w-[21px] items-center justify-center rounded-full border border-[#888] bg-[#333] text-[11px] font-semibold">20</span>
      </div>
      <span class="ml-[6px] h-full w-[1px] bg-[#666]"></span>
    </div>
  </footer>
</body>
</html>
